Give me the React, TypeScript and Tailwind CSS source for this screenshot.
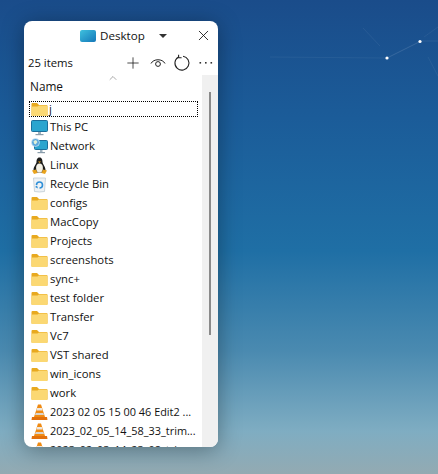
import { Plus, X, ChevronUp } from 'lucide-react';

const FONT = "font-['Open_Sans','Noto_Sans',sans-serif]";

function Folder() {
  return (
    <svg width="17" height="15" viewBox="0 0 17 15" className="shrink-0">
      <path d="M0.5 2 Q0.5 1 1.5 1 H6 L8 3 H15.5 Q16.5 3 16.5 4 V13 Q16.5 14 15.5 14 H1.5 Q0.5 14 0.5 13 Z" fill="#e8a91f" />
      <path d="M0.5 5.5 Q0.5 4.5 1.5 4.5 H6.5 L8 3.5 H15.5 Q16.5 3.5 16.5 4.5 V13 Q16.5 14 15.5 14 H1.5 Q0.5 14 0.5 13 Z" fill="#fbd873" />
    </svg>
  );
}

function Monitor() {
  return (
    <svg width="17" height="16" viewBox="0 0 17 16" className="shrink-0">
      <rect x="0.5" y="0.5" width="16" height="11" rx="1" fill="#2aa5cf" stroke="#1b6f9c" />
      <rect x="7" y="12" width="3" height="2" fill="#9fb2bf" />
      <rect x="4.5" y="14" width="8" height="1.2" fill="#8a9dab" />
    </svg>
  );
}

function NetworkIcon() {
  return (
    <svg width="17" height="17" viewBox="0 0 17 17" className="shrink-0">
      <rect x="3.5" y="2.5" width="13" height="9" rx="1" fill="#2aa5cf" stroke="#1b6f9c" />
      <rect x="9" y="12" width="2.5" height="2" fill="#9fb2bf" />
      <rect x="6.5" y="14" width="7.5" height="1.2" fill="#8a9dab" />
      <circle cx="4.5" cy="4.5" r="4" fill="#5aa7dc" stroke="#e8f2fa" strokeWidth="0.6" />
      <path d="M2.5 3 L5 2 L6.5 4 L4.5 6.5 L3 5.5 Z" fill="#dff0d8" />
    </svg>
  );
}

function Penguin() {
  return (
    <svg width="17" height="18" viewBox="0 0 17 18" className="shrink-0">
      <path d="M8.5 0.5 C6 0.5 5.5 3 5.5 5 C5.5 7 2.5 9.5 2.5 13 C2.5 15 6 15.5 8.5 15.5 C11 15.5 14.5 15 14.5 13 C14.5 9.5 11.5 7 11.5 5 C11.5 3 11 0.5 8.5 0.5 Z" fill="#1d1d1d" />
      <ellipse cx="8.5" cy="11" rx="3.4" ry="4.6" fill="#f4f1e6" />
      <path d="M7 4.4 L10 4.4 L8.5 6 Z" fill="#f0a91e" />
      <path d="M1 13.5 L5 12.5 L6.5 16 L3 17 Z" fill="#e9a31c" />
      <path d="M16 13.5 L12 12.5 L10.5 16 L14 17 Z" fill="#e9a31c" />
    </svg>
  );
}

function Bin() {
  return (
    <svg width="17" height="17" viewBox="0 0 17 17" className="shrink-0">
      <path d="M2.5 2 L14.5 2 L13.5 15.5 Q8.5 16.5 3.5 15.5 Z" fill="#eef2f5" stroke="#b9c5cf" strokeWidth="0.7" />
      <path d="M5.5 9 A3 3 0 1 1 8.5 12" fill="none" stroke="#2f8fd8" strokeWidth="1.6" />
      <path d="M4 11 L7 12.5 L6 9.5 Z" fill="#2f8fd8" />
    </svg>
  );
}

function Cone() {
  return (
    <svg width="17" height="17" viewBox="0 0 17 17" className="shrink-0">
      <path d="M7 0.5 H10 L14 13 H3 Z" fill="#f08a12" />
      <path d="M6.1 4 H10.9 L11.6 6.6 H5.4 Z" fill="#ece8e2" />
      <path d="M4.7 9 H12.3 L13 11 H4 Z" fill="#d9d4cd" />
      <path d="M1 13 H16 L16.5 16 H0.5 Z" fill="#e2700c" />
    </svg>
  );
}

function ViewIcon() {
  return (
    <svg width="16" height="14" viewBox="0 0 16 14" fill="none" stroke="#222" strokeWidth="1" className="ml-[8px] shrink-0">
      <path d="M1 7.5 C3.5 2.5 12.5 2.5 15 7.5" />
      <circle cx="8" cy="8" r="2.4" />
    </svg>
  );
}

function RefreshIcon() {
  return (
    <svg width="18" height="18" viewBox="0 0 18 18" fill="none" stroke="#222" strokeWidth="1.1" className="ml-[7px] shrink-0">
      <path d="M5.2 3.2 A7 7 0 1 0 10 2.2" />
      <path d="M5.6 0.8 V3.7 H8.6" />
    </svg>
  );
}

function MoreIcon() {
  return (
    <svg width="14" height="4" viewBox="0 0 14 4" fill="#333" className="ml-[8px] shrink-0">
      <rect x="0.5" y="1" width="1.6" height="1.6" />
      <rect x="6" y="1" width="1.6" height="1.6" />
      <rect x="11.5" y="1" width="1.6" height="1.6" />
    </svg>
  );
}

const rows = [
  { name: 'This PC', icon: <Monitor /> },
  { name: 'Network', icon: <NetworkIcon /> },
  { name: 'Linux', icon: <Penguin /> },
  { name: 'Recycle Bin', icon: <Bin /> },
  { name: 'configs', icon: <Folder /> },
  { name: 'MacCopy', icon: <Folder /> },
  { name: 'Projects', icon: <Folder /> },
  { name: 'screenshots', icon: <Folder /> },
  { name: 'sync+', icon: <Folder /> },
  { name: 'test folder', icon: <Folder /> },
  { name: 'Transfer', icon: <Folder /> },
  { name: 'Vc7', icon: <Folder /> },
  { name: 'VST shared', icon: <Folder /> },
  { name: 'win_icons', icon: <Folder /> },
  { name: 'work', icon: <Folder /> },
];

const videos = [
  '2023 02 05 15 00 46 Edit2 ...',
  '2023_02_05_14_58_33_trim...',
  '2023_02_03_14_23_08_trim...',
];

export default function App() {
  return (
    <div className={`relative h-[474px] w-[438px] overflow-hidden bg-[linear-gradient(180deg,#1a4c8a_0%,#1b5c99_25%,#1f6fa5_53%,#4a8ab0_74%,#7fadc2_91%,#93aab2_100%)] pl-[24px] pt-[21px] ${FONT}`}>
      {/* wallpaper streaks */}
      <svg width="438" height="120" className="absolute left-0 top-0">
        <path d="M270 57 L385 58" stroke="#ffffff" strokeOpacity="0.05" />
        <path d="M387 58 L419 42" stroke="#ffffff" strokeOpacity="0.12" />
        <path d="M380 46 L363 28" stroke="#ffffff" strokeOpacity="0.06" />
        <path d="M421 41 L438 41" stroke="#ffffff" strokeOpacity="0.08" />
        <path d="M424 37 L438 27" stroke="#ffffff" strokeOpacity="0.06" />
        <path d="M428 57 L438 76" stroke="#ffffff" strokeOpacity="0.06" />
        <circle cx="387" cy="58" r="1.6" fill="#ffffff" />
        <circle cx="420" cy="41.5" r="1.6" fill="#ffffff" />
      </svg>

      <div className="relative flex h-[426px] w-[194px] flex-col overflow-hidden rounded-[8px] bg-white text-[11.3px] text-[#111] shadow-[0_3px_22px_rgba(0,0,0,0.35)]">
        {/* title bar */}
        <div className="flex h-[29px] shrink-0 items-center pl-[56px] pr-[6px]">
          <div className="h-[12px] w-[16px] rounded-[2px] bg-gradient-to-br from-[#3fc1de] to-[#1577b8]" />
          <span className="ml-[4px] text-[11.6px]">Desktop</span>
          <div className="ml-[14px] h-0 w-0 border-x-[4px] border-t-[4px] border-x-transparent border-t-[#333]" />
          <X size={17} strokeWidth={1.2} className="ml-auto" />
        </div>
        {/* toolbar */}
        <div className="flex h-[25px] shrink-0 items-center pl-[4px] pt-[1px]">
          <span>25 items</span>
          <Plus size={18} strokeWidth={1} className="ml-[51px]" />
          <ViewIcon />
          <RefreshIcon />
          <MoreIcon />
        </div>

        <div className="flex min-h-0 flex-1">
          <div className="min-w-0 flex-1">
            <div className="relative h-[26px] pl-[6px] pt-[3px] text-[11.8px]">
              Name
              <ChevronUp size={12} strokeWidth={1} className="absolute left-[83px] top-[-3px] text-[#555]" />
            </div>
            <div className="ml-[5px] mr-[1px] flex h-[16px] items-center gap-[1px] border border-dotted border-black pl-[1px]">
              <Folder />
              <span>j</span>
            </div>
            <div className="mt-[1px] flex flex-col">
              {rows.map(row => (
                <div key={row.name} className="flex h-[19px] items-center gap-[2px] whitespace-nowrap pl-[7px]">
                  {row.icon}
                  <span>{row.name}</span>
                </div>
              ))}
              {videos.map(name => (
                <div key={name} className="flex h-[19px] items-center gap-[2px] whitespace-nowrap pl-[7px] text-[10.9px]">
                  <Cone />
                  <span>{name}</span>
                </div>
              ))}
            </div>
          </div>
          {/* scrollbar */}
          <div className="flex w-[19px] shrink-0 justify-center border-l-[3px] border-white bg-[#f0f0f0] pt-[17px]">
            <div className="h-[243px] w-[2px] bg-[#8a8a8a]" />
          </div>
        </div>
      </div>
    </div>
  );
}
